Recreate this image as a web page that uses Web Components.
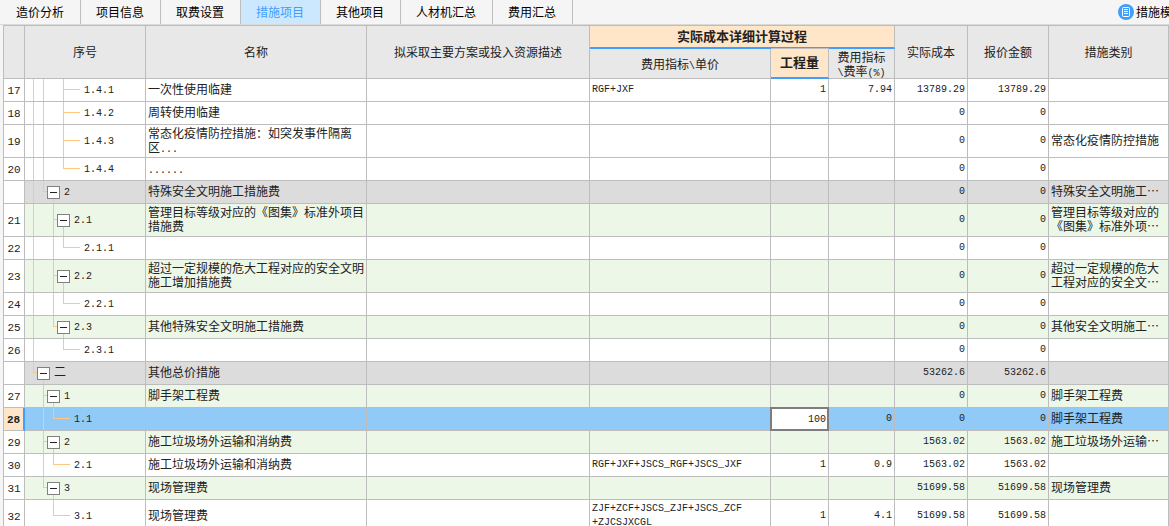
<!DOCTYPE html>
<html lang="zh-CN">
<head>
<meta charset="utf-8">
<title>措施项目</title>
<style>
html,body{margin:0;height:100%;overflow:hidden}
body{font:12px/14px "Noto Sans CJK SC",sans-serif;color:#222;background:#f5f5f5}
</style>
</head>
<body>
<cost-app>
  <tab-bar slot="bar">
    <tab-item>造价分析</tab-item>
    <tab-item>项目信息</tab-item>
    <tab-item>取费设置</tab-item>
    <tab-item active>措施项目</tab-item>
    <tab-item>其他项目</tab-item>
    <tab-item>人材机汇总</tab-item>
    <tab-item>费用汇总</tab-item>
    <template-button slot="actions">措施模</template-button>
  </tab-bar>
  <cost-grid></cost-grid>
</cost-app>
<script>
class Base extends HTMLElement{
  connectedCallback(){
    if(this.shadowRoot)return;
    this.attachShadow({mode:'open'}).innerHTML=this.render();
  }
}

customElements.define('cost-app',class extends Base{
  render(){return `<style>
    :host{display:flex;flex-direction:column;height:100vh;overflow:hidden}
    main{flex:1;min-height:0;overflow:auto;scrollbar-width:none;padding-left:3px}
  </style><slot name="bar"></slot><main><slot></slot></main>`}
});

customElements.define('tab-bar',class extends Base{
  render(){return `<style>
    :host{display:flex;flex:none;height:24px;justify-content:space-between;border-bottom:1px solid #d9d9d9;padding-left:1px;overflow:hidden;white-space:nowrap}
    nav{display:flex}
  </style><nav><slot></slot></nav><slot name="actions"></slot>`}
});

customElements.define('tab-item',class extends Base{
  render(){return `<style>
    :host{display:block}
    button{display:block;height:100%;margin:0;padding:0 16px 0 15px;border:0;border-right:1px solid #bdbdbd;background:none;font:inherit;color:#000}
    :host([active]) button{background:#cce8ff;color:#409eff}
  </style><button type="button"><slot></slot></button>`}
});

customElements.define('template-button',class extends Base{
  render(){return `<style>
    :host{display:block;flex:none;width:51px}
    button{display:flex;align-items:center;gap:2px;height:100%;margin:0;padding:0;border:0;background:none;font:inherit;color:#000}
    svg{flex:none}
  </style><button type="button"><svg width="16" height="16" viewBox="0 0 16 16"><circle cx="8" cy="8" r="8" fill="#409eff"/><rect x="4.5" y="3.5" width="7" height="9" rx="1" fill="none" stroke="#fff"/><path d="M6 5.5h4M6 7.5h4M6 9.5h4" stroke="#fff"/></svg><slot></slot></button>`}
});

/* One cell of the outline column. "guides" has one letter per level:
   v = line passes through, s = space, t = branch, l = last branch. */
customElements.define('tree-node',class extends Base{
  render(){
    const g=[...this.getAttribute('guides')],box=this.hasAttribute('box');
    return `<style>
    :host{display:flex;height:100%;min-height:22px;padding-left:8px;box-sizing:border-box;align-items:stretch}
    i{flex:none;width:10px;background:linear-gradient(#ffc77d,#ffc77d) 0 0/1px 100% no-repeat}
    i.s{background:none}
    i.t,i.l{display:grid;grid-template-rows:1fr 1fr;width:17px;background:none}
    i.t.b,i.l.b{width:4px}
    i.t::before,i.l::before{content:"";border-left:1px solid #ffc77d;border-bottom:1px solid #ffc77d}
    i.t::after{content:"";border-left:1px solid #ffc77d}
    .box{display:grid;grid-template-rows:1fr 13px 1fr;width:13px;flex:none}
    .box::after{content:"";width:1px;margin-left:6px;background:#ffc77d}
    .box::before{content:""}
    button{display:grid;place-items:center;box-sizing:border-box;width:13px;height:13px;margin:0;padding:0;border:1px solid #808080;background:#fff}
    button::before{content:"";width:7px;height:1px;background:#222}
    span{align-self:center;margin-left:4px;padding-bottom:4px}
    </style>${g.map(c=>`<i class="${c}${box?' b':''}"></i>`).join('')}${box?'<div class="box"><button type="button" aria-label="折叠"></button></div>':''}<span><slot></slot></span>`}
});

const ROWS=[
 ['17','','vvst','1.4.1','一次性使用临建','RGF+JXF','1','7.94','13789.29','13789.29',''],
 ['18','','vvst','1.4.2','周转使用临建','','','','0','0',''],
 ['19','','vvst','1.4.3','常态化疫情防控措施：如突发事件隔离\n区<b>...</b>','','','','0','0','常态化疫情防控措施'],
 ['20','','vvsl','1.4.4','<b>......</b>','','','','0','0',''],
 ['','grey','vl+','2','特殊安全文明施工措施费','','','','0','0','特殊安全文明施工…'],
 ['21','green','vst+','2.1','管理目标等级对应的《图集》标准外项目\n措施费','','','','0','0','管理目标等级对应的\n《图集》标准外项…'],
 ['22','','vsvl','2.1.1','','','','','0','0',''],
 ['23','green','vst+','2.2','超过一定规模的危大工程对应的安全文明\n施工增加措施费','','','','0','0','超过一定规模的危大\n工程对应的安全文…'],
 ['24','','vsvl','2.2.1','','','','','0','0',''],
 ['25','green','vsl+','2.3','其他特殊安全文明施工措施费','','','','0','0','其他安全文明施工…'],
 ['26','','vssl','2.3.1','','','','','0','0',''],
 ['','grey','l+','二','其他总价措施','','','','53262.6','53262.6',''],
 ['27','green','st+','1','脚手架工程费','','','','0','0','脚手架工程费'],
 ['28','sel','svl','1.1','','','100','0','0','0','脚手架工程费'],
 ['29','green','st+','2','施工垃圾场外运输和消纳费','','','','1563.02','1563.02','施工垃圾场外运输…'],
 ['30','','svl','2.1','施工垃圾场外运输和消纳费','RGF+JXF+JSCS_RGF+JSCS_JXF','1','0.9','1563.02','1563.02',''],
 ['31','green','sl+','3','现场管理费','','','','51699.58','51699.58','现场管理费'],
 ['32','','ssl','3.1','现场管理费','ZJF+ZCF+JSCS_ZJF+JSCS_ZCF\n+ZJCSJXCGL','1','4.1','51699.58','51699.58','']
];

customElements.define('cost-grid',class extends Base{
  row([no,kind,guides,code,name,index,qty,rate,cost,price,type]){
    const box=guides.endsWith('+'),g=guides.replace('+','');
    const num=v=>`<td class="n">${v}</td>`;
    const amount=kind==='sel'?`<td class="n edit"><input value="${qty}" aria-label="工程量"></td>`:num(qty);
    const c=code==='二'?code:`<b>${code}</b>`;
    return `<tr class="${kind}"><th scope="row">${no}</th><td class="tree"><tree-node guides="${g}"${box?' box':''}>${c}</tree-node></td><td>${name}</td><td></td><td class="m">${index}</td>${amount}${num(rate)}${num(cost)}${num(price)}<td>${type}</td></tr>`;
  }
  render(){return `<style>
    :host{display:block;background:#fff}
    table{width:100%;min-width:1000px;table-layout:fixed;border-collapse:separate;border-spacing:0;border-top:1px solid #bdbdbd;border-left:1px solid #bdbdbd;text-spacing-trim:space-all}
    th,td{box-sizing:border-box;border-right:1px solid #bdbdbd;border-bottom:1px solid #bdbdbd;font-weight:400}
    thead th{background:#e8e8e8;padding:0;text-align:center;white-space:pre-line}
    thead th.hot{background:#ffe6c8;padding-bottom:2px;font-size:13px;font-weight:700}
    th.group{height:23px;border-bottom:2px solid #409eff}
    th.sub{height:30px}
    th.sub.hot{border-bottom:2px solid #409eff;box-shadow:0 -1px #bdbdbd}
    td{height:23px;padding:1px 1px 3px 2px;white-space:pre-line}
    .tree{padding:0}
    .m,.n{font:10px/14px "Liberation Mono",monospace;padding-top:2px;padding-bottom:2px}
    b{font:10px/6px "Liberation Mono",monospace}
    .n{text-align:right;padding-right:2px}
    tbody th{padding:2px 0 0;background:#fff;font:11px/14px "Liberation Mono",monospace;text-align:center}
    .grey td{background:#dcdcdc}
    .green td{background:#ecf7e8}
    .sel td{background:#91c9f7}
    .sel th{background:#ffe6c8;font-weight:700;border-right:2px solid #409eff}
    .edit{position:relative}
    input{position:absolute;inset:-1px;box-sizing:border-box;width:calc(100% + 2px);height:calc(100% + 2px);margin:0;padding:0 1px;border:2px solid #7d7d7d;border-radius:0;background:#fff;font:inherit;color:inherit;text-align:right}
  </style>
  <table>
    <colgroup><col style="width:21px"><col style="width:121px"><col style="width:221px"><col><col style="width:181px"><col style="width:58px"><col style="width:66px"><col style="width:73px"><col style="width:81px"><col style="width:120px"></colgroup>
    <thead>
      <tr><th rowspan="2"></th><th rowspan="2">序号</th><th rowspan="2">名称</th><th rowspan="2">拟采取主要方案或投入资源描述</th><th class="group hot" colspan="3">实际成本详细计算过程</th><th rowspan="2">实际成本</th><th rowspan="2">报价金额</th><th rowspan="2">措施类别</th></tr>
      <tr><th class="sub">费用指标<b>\\</b>单价</th><th class="sub hot">工程量</th><th class="sub">费用指标\n<b>\\</b>费率<b>(%)</b></th></tr>
    </thead>
    <tbody>${ROWS.map(r=>this.row(r)).join('')}</tbody>
  </table>`}
});
</script>
</body>
</html>
